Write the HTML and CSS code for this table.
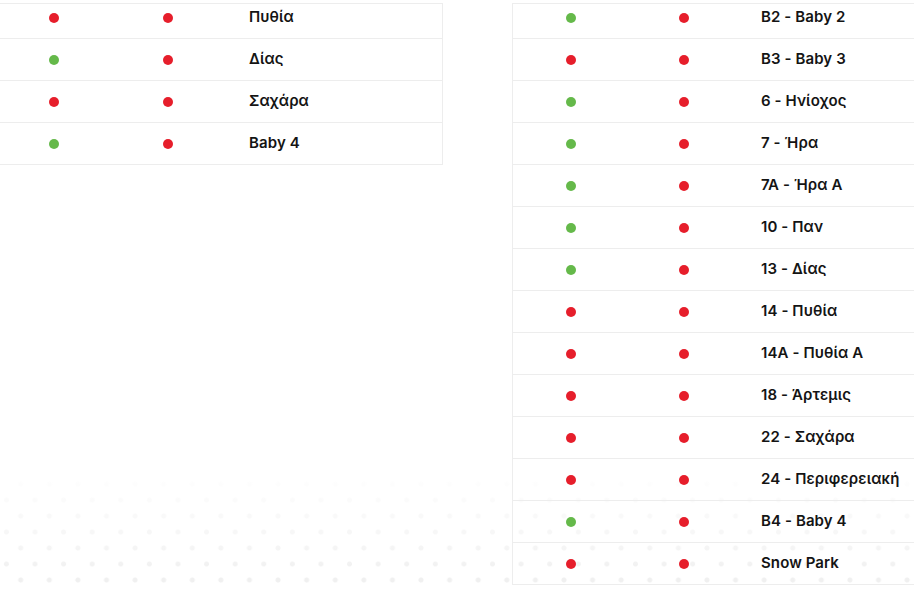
FILE: index.html
```html
<!DOCTYPE html>
<html lang="el">
<head>
<meta charset="utf-8">
<title>Lifts</title>
<link rel="stylesheet" href="styles.css">
</head>
<body>
<div class="board">
  <div class="table table--left">
    <div class="row row--first"><span class="cell"><i class="dot red"></i></span><span class="cell"><i class="dot red"></i></span><span class="name">Πυθία</span></div>
    <div class="row"><span class="cell"><i class="dot green"></i></span><span class="cell"><i class="dot red"></i></span><span class="name">Δίας</span></div>
    <div class="row"><span class="cell"><i class="dot red"></i></span><span class="cell"><i class="dot red"></i></span><span class="name">Σαχάρα</span></div>
    <div class="row"><span class="cell"><i class="dot green"></i></span><span class="cell"><i class="dot red"></i></span><span class="name">Baby 4</span></div>
  </div>
  <div class="table table--right">
    <div class="row row--first"><span class="cell"><i class="dot green"></i></span><span class="cell"><i class="dot red"></i></span><span class="name">B2 - Baby 2</span></div>
    <div class="row"><span class="cell"><i class="dot red"></i></span><span class="cell"><i class="dot red"></i></span><span class="name">B3 - Baby 3</span></div>
    <div class="row"><span class="cell"><i class="dot green"></i></span><span class="cell"><i class="dot red"></i></span><span class="name">6 - Ηνίοχος</span></div>
    <div class="row"><span class="cell"><i class="dot green"></i></span><span class="cell"><i class="dot red"></i></span><span class="name">7 - Ήρα</span></div>
    <div class="row"><span class="cell"><i class="dot green"></i></span><span class="cell"><i class="dot red"></i></span><span class="name">7Α - Ήρα Α</span></div>
    <div class="row"><span class="cell"><i class="dot green"></i></span><span class="cell"><i class="dot red"></i></span><span class="name">10 - Παν</span></div>
    <div class="row"><span class="cell"><i class="dot green"></i></span><span class="cell"><i class="dot red"></i></span><span class="name">13 - Δίας</span></div>
    <div class="row"><span class="cell"><i class="dot red"></i></span><span class="cell"><i class="dot red"></i></span><span class="name">14 - Πυθία</span></div>
    <div class="row"><span class="cell"><i class="dot red"></i></span><span class="cell"><i class="dot red"></i></span><span class="name">14Α - Πυθία Α</span></div>
    <div class="row"><span class="cell"><i class="dot red"></i></span><span class="cell"><i class="dot red"></i></span><span class="name">18 - Άρτεμις</span></div>
    <div class="row"><span class="cell"><i class="dot red"></i></span><span class="cell"><i class="dot red"></i></span><span class="name">22 - Σαχάρα</span></div>
    <div class="row"><span class="cell"><i class="dot red"></i></span><span class="cell"><i class="dot red"></i></span><span class="name">24 - Περιφερειακή</span></div>
    <div class="row"><span class="cell"><i class="dot green"></i></span><span class="cell"><i class="dot red"></i></span><span class="name">B4 - Baby 4</span></div>
    <div class="row"><span class="cell"><i class="dot red"></i></span><span class="cell"><i class="dot red"></i></span><span class="name">Snow Park</span></div>
  </div>
</div>
</body>
</html>
```

FILE: styles.css
```css
html {
  height: 100%;
  background-color: #fff;
  background-image:
    linear-gradient(to bottom, #fff 0, #fff 472px, rgba(255,255,255,0.6) 530px, rgba(255,255,255,0.15) 589px),
    radial-gradient(circle at 20.7px 4px, #ececec 0, #ececec 2px, rgba(236,236,236,0) 3px),
    radial-gradient(circle at 6.4px 20px, #ececec 0, #ececec 2px, rgba(236,236,236,0) 3px);
  background-size: 100% 100%, 28.6px 32px, 28.6px 32px;
  background-repeat: no-repeat, repeat, repeat;
}

body {
  margin: 0;
  overflow: hidden;
  font-family: Inter, "Noto Sans", "DejaVu Sans", sans-serif;
  color: #141414;
}

.board {
  display: flex;
  align-items: flex-start;
  gap: 69px;
  width: calc(100% + 4px);
  margin-left: -4px;
  padding-top: 3px;
}

.table {
  border-top: 1px solid #ededed;
}

.table--left {
  flex: 0 0 447px;
  border-right: 1px solid #ededed;
  box-sizing: border-box;
}

.table--right {
  flex: 1 1 auto;
  min-width: 0;
  border-left: 1px solid #ededed;
}

.row {
  display: grid;
  grid-template-columns: 116px 112px 1fr;
  align-items: center;
  height: 41px;
  border-bottom: 1px solid #ededed;
}

.table--right .row {
  grid-template-columns: 115px 112px 1fr;
}

.table .row--first {
  height: 27px;
  padding-bottom: 7px;
}

.cell {
  display: flex;
  justify-content: center;
  align-items: center;
}

.dot {
  display: block;
  width: 10px;
  height: 10px;
  border-radius: 50%;
}

.red { background: #e61e2b; }
.green { background: #65b94a; }

.name {
  padding-left: 25px;
  padding-bottom: 2px;
  font-size: 15px;
  font-weight: 600;
  line-height: 20px;
  white-space: nowrap;
  letter-spacing: 0.1px;
}

.table--right .name {
  padding-left: 21px;
}
```
